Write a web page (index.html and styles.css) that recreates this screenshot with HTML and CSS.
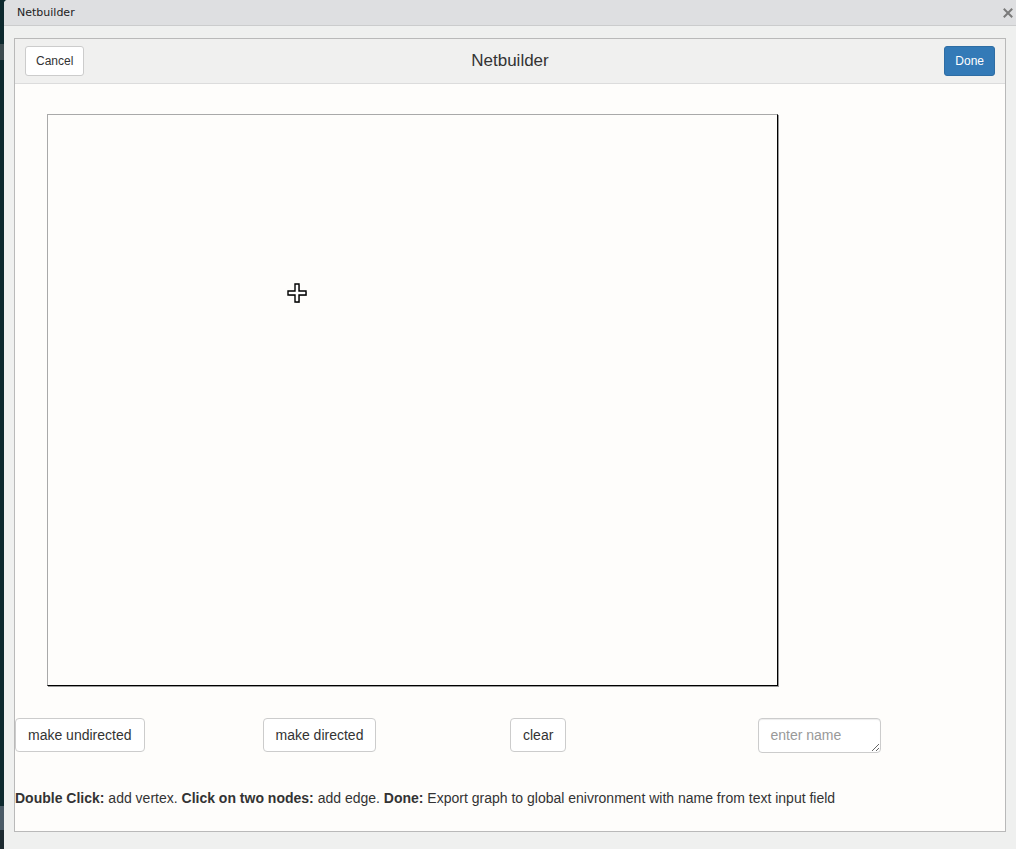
FILE: index.html
```html
<!DOCTYPE html>
<html>
<head>
<meta charset="utf-8">
<title>Netbuilder</title>
<link rel="stylesheet" href="styles.css">
</head>
<body>
<div class="desk">
  <div class="desk-a"></div>
  <div class="desk-b"></div>
  <div class="desk-c"></div>
  <div class="desk-d"></div>
  <div class="desk-e"></div>
</div>
<div class="window">
  <div class="titlebar">
    <span class="wtitle">Netbuilder</span>
    <svg class="close" width="10" height="10" viewBox="0 0 10 10"><path d="M1.5 1.5 L8.5 8.5 M8.5 1.5 L1.5 8.5" stroke="#7a7a7a" stroke-width="2" stroke-linecap="square"/></svg>
  </div>
  <div class="main">
    <div class="panel">
      <div class="header">
        <button class="btn-sm btn-cancel">Cancel</button>
        <div class="ptitle">Netbuilder</div>
        <button class="btn-sm btn-done">Done</button>
      </div>
      <div class="content">
        <div class="canvas">
          <svg class="cursor" width="24" height="24" viewBox="0 0 24 24">
            <polygon points="10,3 14,3 14,10 21,10 21,14 14,14 14,21 10,21 10,14 3,14 3,10 10,10" fill="#777" opacity="0.5"/>
            <polygon points="9,2 13,2 13,9 20,9 20,13 13,13 13,20 9,20 9,13 2,13 2,9 9,9" fill="#fff" stroke="#000" stroke-width="1.4" stroke-linejoin="miter"/>
          </svg>
        </div>
        <div class="controls">
          <div class="cell"><button class="btn">make undirected</button></div>
          <div class="cell"><button class="btn">make directed</button></div>
          <div class="cell"><button class="btn">clear</button></div>
          <div class="cell"><textarea class="name" placeholder="enter name"></textarea></div>
        </div>
        <p class="help"><b>Double Click:</b> add vertex. <b>Click on two nodes:</b> add edge. <b>Done:</b> Export graph to global enivronment with name from text input field</p>
      </div>
    </div>
  </div>
</div>
</body>
</html>
```
FILE: styles.css
```css
html, body {
  margin: 0;
  height: 849px;
  overflow: hidden;
}
body {
  display: flex;
  background: #0d292e;
  font-family: "Liberation Sans", Arial, sans-serif;
}
.desk {
  width: 4px;
  display: flex;
  flex-direction: column;
}
.desk-a { height: 44px; background: #0d292e; }
.desk-b { height: 16px; background: #3c4b4f; }
.desk-c { height: 746px; background: #0d292e; }
.desk-d { height: 24px; background: #4a5a66; }
.desk-e { flex: 1; background: #1d2a30; }
.window {
  flex: 1;
  display: flex;
  flex-direction: column;
  background: #eff0ef;
  border-top-left-radius: 4px;
  overflow: hidden;
}
.titlebar {
  height: 25px;
  flex: none;
  background: #dedfe1;
  border-bottom: 1px solid #cbcccd;
  display: flex;
  align-items: center;
  justify-content: space-between;
  padding: 0 3px 0 13px;
}
.wtitle {
  font-family: "DejaVu Sans", sans-serif;
  font-size: 11px;
  color: #222;
}
.close { display: block; }
.main {
  flex: 1;
  display: flex;
  flex-direction: column;
  padding: 12px 10px 17px 10px;
}
.panel {
  flex: 1;
  display: flex;
  flex-direction: column;
  border: 1px solid #b9b9b9;
  background: #fefdfb;
}
.header {
  display: grid;
  grid-template-columns: 1fr auto 1fr;
  align-items: center;
  padding: 7px 10px;
  background: #f0f0ef;
  border-bottom: 1px solid #dcdcdc;
}
.btn-sm {
  font-family: "Liberation Sans", Arial, sans-serif;
  font-size: 12px;
  line-height: 18px;
  padding: 5px 10px;
  border-radius: 3px;
  border: 1px solid #ccc;
  background: #fff;
  color: #333;
}
.btn-cancel { justify-self: start; }
.btn-done {
  justify-self: end;
  background: #337ab7;
  border-color: #2e6da4;
  color: #fff;
}
.ptitle {
  font-size: 17px;
  color: #333;
}
.content {
  flex: 1;
  display: flex;
  flex-direction: column;
  padding: 30px 0 0 0;
}
.canvas {
  position: relative;
  box-sizing: border-box;
  width: 731px;
  height: 572px;
  margin-left: 32px;
  background: #fefdfb;
  border: 1px solid;
  border-color: #a9a9a9 #000 #000 #a9a9a9;
  box-shadow: 1px 1px 0 #9a9a9a;
}
.cursor {
  position: absolute;
  left: 238px;
  top: 167px;
}
.controls {
  margin-top: 32px;
  display: grid;
  grid-template-columns: repeat(4, 1fr);
  align-items: start;
}
.btn {
  font-family: "Liberation Sans", Arial, sans-serif;
  font-size: 14px;
  line-height: 20px;
  padding: 6px 12px;
  border: 1px solid #ccc;
  border-radius: 4px;
  background: #fff;
  color: #333;
}
.name {
  display: block;
  box-sizing: border-box;
  width: 123px;
  height: 35px;
  margin: 0;
  padding: 6px 12px;
  font-family: "Liberation Sans", Arial, sans-serif;
  font-size: 14px;
  line-height: 20px;
  color: #555;
  border: 1px solid #ccc;
  border-radius: 4px;
  box-shadow: inset 0 1px 1px rgba(0,0,0,.075);
  background: #fff;
}
.name::placeholder { color: #999; }
.help {
  margin: 35px 0 0 0;
  font-size: 14px;
  line-height: 20px;
  color: #333;
}
```
